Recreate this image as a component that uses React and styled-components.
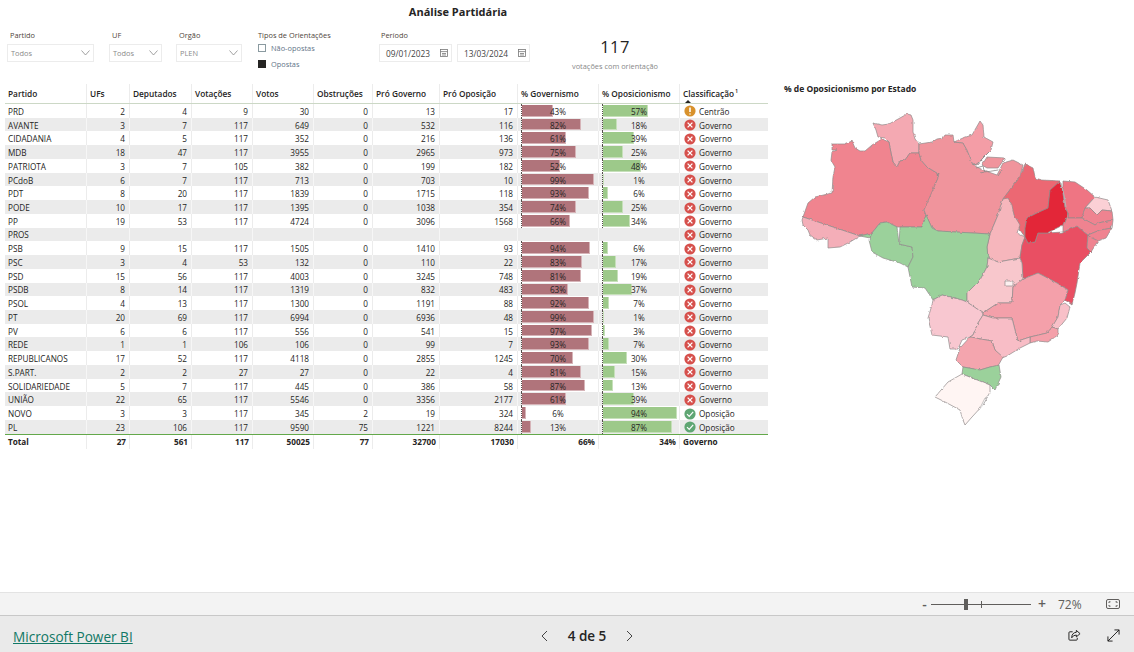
import React from 'react';
import styled, { createGlobalStyle } from 'styled-components';

const FONT = '"Open Sans", "Noto Sans", "Liberation Sans", sans-serif';

const GlobalStyle = createGlobalStyle`
  html, body {
    margin: 0;
    padding: 0;
    background: #fff;
  }
  body {
    font-family: ${FONT};
    overflow: hidden;
  }
`;

const COLUMNS = '81px 43px 62px 61px 61px 59px 67px 78px 81px 81px 89px';

const PARTIES = [
  ['PRD', 2, 4, 9, 30, 0, 13, 17, 43, 57, 'Centrão'],
  ['AVANTE', 3, 7, 117, 649, 0, 532, 116, 82, 18, 'Governo'],
  ['CIDADANIA', 4, 5, 117, 352, 0, 216, 136, 61, 39, 'Governo'],
  ['MDB', 18, 47, 117, 3955, 0, 2965, 973, 75, 25, 'Governo'],
  ['PATRIOTA', 3, 7, 105, 382, 0, 199, 182, 52, 48, 'Governo'],
  ['PCdoB', 6, 7, 117, 713, 0, 703, 10, 99, 1, 'Governo'],
  ['PDT', 8, 20, 117, 1839, 0, 1715, 118, 93, 6, 'Governo'],
  ['PODE', 10, 17, 117, 1395, 0, 1038, 354, 74, 25, 'Governo'],
  ['PP', 19, 53, 117, 4724, 0, 3096, 1568, 66, 34, 'Governo'],
  ['PROS', '', '', '', '', '', '', '', null, null, 'Governo'],
  ['PSB', 9, 15, 117, 1505, 0, 1410, 93, 94, 6, 'Governo'],
  ['PSC', 3, 4, 53, 132, 0, 110, 22, 83, 17, 'Governo'],
  ['PSD', 15, 56, 117, 4003, 0, 3245, 748, 81, 19, 'Governo'],
  ['PSDB', 8, 14, 117, 1319, 0, 832, 483, 63, 37, 'Governo'],
  ['PSOL', 4, 13, 117, 1300, 0, 1191, 88, 92, 7, 'Governo'],
  ['PT', 20, 69, 117, 6994, 0, 6936, 48, 99, 1, 'Governo'],
  ['PV', 6, 6, 117, 556, 0, 541, 15, 97, 3, 'Governo'],
  ['REDE', 1, 1, 106, 106, 0, 99, 7, 93, 7, 'Governo'],
  ['REPUBLICANOS', 17, 52, 117, 4118, 0, 2855, 1245, 70, 30, 'Governo'],
  ['S.PART.', 2, 2, 27, 27, 0, 22, 4, 81, 15, 'Governo'],
  ['SOLIDARIEDADE', 5, 7, 117, 445, 0, 386, 58, 87, 13, 'Governo'],
  ['UNIÃO', 22, 65, 117, 5546, 0, 3356, 2177, 61, 39, 'Governo'],
  ['NOVO', 3, 3, 117, 345, 2, 19, 324, 6, 94, 'Oposição'],
  ['PL', 23, 106, 117, 9590, 75, 1221, 8244, 13, 87, 'Oposição'],
];

const HEADERS = [
  'Partido',
  'UFs',
  'Deputados',
  'Votações',
  'Votos',
  'Obstruções',
  'Pró Governo',
  'Pró Oposição',
  '% Governismo',
  '% Oposicionismo',
];

const STATES = [
  { id: 'RR', fill: '#f4a9b2', points: '873,123 882,125 889,124 900,118 907,114 911,115 913,120 913,132 915,139 919,144 919,153 910,153 905,160 900,161 897,167 893,162 891,153 889,142 885,138 878,137 876,130' },
  { id: 'AM', fill: '#f0848f', points: '832,144 845,144 852,141 855,148 860,151 865,151 872,145 882,139 889,142 891,153 893,162 897,167 900,161 905,160 910,153 919,153 921,160 927,167 937,173 938,178 932,195 924,210 926,215 922,227 897,227 887,222 880,223 872,233 860,236 830,226 803,217 808,203 815,197 832,193 833,177 835,167 831,160 832,152 837,150 832,150' },
  { id: 'AC', fill: '#f4aeb8', points: '802,220 803,217 830,226 860,236 850,242 840,247 828,248 828,238 817,240 810,235 808,230 803,225' },
  { id: 'PA', fill: '#f0949c', points: '919,144 932,142 937,139 943,138 945,135 953,135 954,142 963,143 967,150 973,165 983,170 997,175 1003,163 1013,160 1023,165 1020,177 1012,187 1003,199 998,215 990,234 938,231 932,228 926,215 924,210 938,178 937,173 927,167 921,160 919,153' },
  { id: 'AP', fill: '#f49da6', points: '954,142 963,138 972,135 980,121 983,125 984,137 993,142 991,150 983,158 977,165 973,165 967,150 963,143' },
  { id: 'Marajo', fill: '#f0949c', points: '987,157 1005,158 998,168 987,168 982,165' },
  { id: 'MA', fill: '#ec6873', points: '1025,164 1033,168 1035,178 1042,180 1060,181 1050,190 1048,208 1037,213 1027,218 1025,228 1025,237 1020,230 1017,222 1013,213 1007,200 1003,199 1012,187 1020,177' },
  { id: 'TO', fill: '#f6b6bc', points: '1008,198 1012,205 1014,215 1020,225 1017,233 1025,237 1022,245 1020,258 998,262 988,258 987,247 990,234 998,215 1003,199' },
  { id: 'BA', fill: '#e95063', points: '1025,237 1028,243 1035,242 1038,233 1047,233 1063,232 1077,226 1088,235 1087,248 1091,252 1080,263 1077,283 1075,293 1072,305 1065,300 1068,290 1057,283 1038,273 1023,279 1022,263 1020,258 1022,245' },
  { id: 'PI', fill: '#e32639', points: '1060,181 1063,193 1065,207 1068,213 1063,225 1047,233 1038,233 1035,242 1028,243 1025,237 1025,228 1027,218 1037,213 1048,208 1050,190' },
  { id: 'CE', fill: '#ef7483', points: '1063,181 1075,182 1087,190 1095,197 1085,208 1082,218 1068,218 1068,213 1065,207 1063,193' },
  { id: 'RN', fill: '#fbd0d5', points: '1095,197 1108,200 1112,211 1102,210 1097,215 1090,208 1085,208' },
  { id: 'PB', fill: '#ef8390', points: '1082,218 1085,208 1090,208 1097,215 1102,210 1112,211 1113,220 1098,223 1095,225' },
  { id: 'PE', fill: '#ef8390', points: '1068,218 1082,218 1095,225 1098,223 1113,220 1112,228 1100,230 1088,235 1077,226 1063,232 1063,225 1068,213' },
  { id: 'AL', fill: '#ef8390', points: '1100,230 1112,228 1106,238 1098,241 1090,237 1088,235' },
  { id: 'SE', fill: '#ef8390', points: '1088,235 1090,237 1098,241 1091,252 1087,248' },
  { id: 'RO', fill: '#9bd19b', points: '897,227 899,244 912,247 913,257 908,267 900,263 883,258 872,252 869,240 872,233 880,223 887,222' },
  { id: 'MT', fill: '#9bd19b', points: '900,227 922,227 926,215 932,228 938,231 990,234 987,247 988,258 987,267 980,280 967,293 967,302 962,300 942,295 933,300 925,288 912,287 910,277 908,267 913,257 912,247 899,244' },
  { id: 'Sliver', fill: '#9bd19b', points: '860,236 872,233 870,238' },
  { id: 'GO', fill: '#f8c7cc', points: '988,258 998,262 1020,258 1022,263 1023,279 1013,287 1012,303 998,303 983,313 967,302 967,293 980,280 987,267' },
  { id: 'DF', fill: '#fdf0f0', points: '1005,281 1013,281 1013,286 1005,286' },
  { id: 'MS', fill: '#f8c7d0', points: '942,295 962,300 967,302 983,313 983,315 978,323 973,335 970,337 962,340 958,349 950,349 948,337 932,335 928,318 932,305 933,300' },
  { id: 'MG', fill: '#f4a0aa', points: '1023,279 1038,273 1057,283 1068,290 1065,300 1060,305 1058,317 1052,328 1047,333 1030,337 1018,341 1015,330 1012,318 993,318 983,315 983,313 998,303 1012,303 1013,287' },
  { id: 'ES', fill: '#f8c0c8', points: '1065,303 1070,307 1067,318 1058,329 1052,327 1058,317 1060,305' },
  { id: 'RJ', fill: '#f4a0aa', points: '1052,327 1058,329 1058,335 1048,342 1037,341 1030,343 1030,337 1047,333' },
  { id: 'SP', fill: '#f8bdc6', points: '983,315 993,318 1012,318 1015,330 1018,341 1030,337 1030,343 1020,348 1007,356 1002,358 995,350 992,341 970,337 973,335 978,323' },
  { id: 'PR', fill: '#f4a5ae', points: '970,337 992,341 995,350 1003,357 998,366 990,367 980,370 963,367 956,360 960,348' },
  { id: 'SC', fill: '#9bd19b', points: '963,367 980,370 990,367 999,365 1001,377 995,390 990,385 962,374' },
  { id: 'RS', fill: '#fff5f3', points: '962,374 990,385 990,392 983,405 972,417 965,425 963,420 960,410 947,403 935,397 948,382' },
];

const STATUS_COLORS = {
  Centrão: '#d8912c',
  Governo: '#d6504c',
  Oposição: '#5fa673',
};

const Page = styled.div`
  width: 1134px;
  height: 652px;
  display: flex;
  flex-direction: column;
  overflow: hidden;
`;

const Report = styled.main`
  flex: 1;
  min-height: 0;
  display: flex;
  flex-direction: column;
  padding-top: 4px;
`;

const Title = styled.h1`
  width: 916px;
  height: 26px;
  margin: 0;
  text-align: center;
  font-size: 11px;
  line-height: 16px;
  font-weight: 700;
  color: #252423;
`;

const FilterRow = styled.section`
  height: 54px;
  display: flex;
  padding-left: 7px;
`;

const Slicer = styled.div`
  width: ${(props) => props.$width}px;
  margin-right: ${(props) => props.$gap}px;
  display: flex;
  flex-direction: column;
`;

const SlicerLabel = styled.span`
  height: ${(props) => props.$height || 14}px;
  padding-left: 3px;
  font-size: 7.4px;
  line-height: 11px;
  color: #4f453c;
  white-space: nowrap;
`;

const Dropdown = styled.div`
  height: 18px;
  box-sizing: border-box;
  display: flex;
  align-items: center;
  justify-content: space-between;
  padding: 0 3px;
  border: 1px solid #ececec;
  font-size: 7.4px;
  color: #8a8a8a;
`;

const DateRow = styled.div`
  display: flex;
  gap: 5px;
  margin-left: 1px;
`;

const DateField = styled(Dropdown)`
  width: 73px;
  padding: 0 3px 0 6px;
  font-size: 8.3px;
  color: #444;
`;

const CheckRow = styled.div`
  height: 16px;
  display: flex;
  align-items: center;
  gap: 5px;
  padding-left: 3px;
  font-size: 7.4px;
  color: #5f7488;
`;

const CheckBox = styled.span`
  width: 8px;
  height: 8px;
  box-sizing: border-box;
  border: 1px solid ${(props) => (props.$checked ? '#252423' : '#8a9aa0')};
  background: ${(props) => (props.$checked ? '#252423' : '#fff')};
`;

const Kpi = styled.div`
  width: 170px;
  display: flex;
  flex-direction: column;
  align-items: center;
  padding-top: 6px;
`;

const KpiValue = styled.span`
  font-size: 16.5px;
  line-height: 22px;
  color: #252423;
  letter-spacing: 0.4px;
`;

const KpiCaption = styled.span`
  margin-top: 3px;
  font-size: 7.4px;
  line-height: 10px;
  color: #888;
`;

const Content = styled.section`
  display: flex;
  padding-left: 5px;
`;

const Table = styled.div`
  width: 763px;
  flex: none;
`;

const HeaderRow = styled.div`
  height: 20px;
  display: grid;
  grid-template-columns: ${COLUMNS};
  border-bottom: 1px solid #ccd8c6;
  box-sizing: border-box;
`;

const HeaderCell = styled.div`
  position: relative;
  display: flex;
  align-items: center;
  box-sizing: border-box;
  padding: 0 0 1px 3px;
  border-left: ${(props) => (props.$first ? 'none' : '1px solid #ececec')};
  font-size: 8.3px;
  font-weight: 600;
  color: #252423;
  white-space: nowrap;
`;

const SortCaret = styled.span`
  position: absolute;
  left: 5px;
  bottom: 0;
  width: 0;
  height: 0;
  border-left: 3px solid transparent;
  border-right: 3px solid transparent;
  border-bottom: 3px solid #252423;
`;

const Sup = styled.span`
  align-self: flex-start;
  margin: 4px 0 0 1px;
  font-size: 5.5px;
  line-height: 6px;
`;

const Row = styled.div`
  height: 13.74px;
  display: grid;
  grid-template-columns: ${COLUMNS};
  background: ${(props) => (props.$shaded ? '#ebebeb' : '#fff')};
`;

const Cell = styled.div`
  position: relative;
  box-sizing: border-box;
  display: flex;
  align-items: center;
  justify-content: ${(props) => (props.$align === 'left' ? 'flex-start' : 'flex-end')};
  padding: 1px 4px 0 3px;
  border-left: ${(props) => (props.$first ? 'none' : `1px solid ${props.$shaded ? '#f6f6f6' : '#ececec'}`)};
  font-size: 8.2px;
  color: #252423;
  white-space: nowrap;
  overflow: hidden;
`;

const TotalRow = styled.div`
  height: 14px;
  display: grid;
  grid-template-columns: ${COLUMNS};
  border-top: 1px solid #63a84a;
`;

const TotalCell = styled(Cell)`
  font-weight: 700;
  padding: 0 3px;
`;

const BarCell = styled(Cell)`
  justify-content: center;
  padding: 1px 0 0;
`;

const AxisLine = styled.span`
  position: absolute;
  left: 3px;
  top: 0;
  bottom: 0;
  border-left: 1px dotted #55504c;
`;

const Bar = styled.span`
  position: absolute;
  left: 4px;
  top: 1px;
  bottom: 1px;
  box-sizing: border-box;
  background: ${(props) => props.$color};
  border-right: 1px solid ${(props) => props.$edge};
  border-bottom: 1px solid ${(props) => props.$edge};
`;

const BarLabel = styled.span`
  position: relative;
`;

const StatusCell = styled(Cell)`
  justify-content: flex-start;
  gap: 3px;
  padding-left: 4px;
`;

const MapPanel = styled.div`
  flex: 1;
  padding-left: 16px;
`;

const MapTitle = styled.h2`
  margin: 0;
  height: 11px;
  font-size: 8.5px;
  line-height: 9px;
  font-weight: 700;
  color: #252423;
  white-space: nowrap;
`;

const MapSvg = styled.svg`
  display: block;
  margin-left: 11px;
`;

const ZoomBar = styled.div`
  height: 24px;
  flex: none;
  box-sizing: border-box;
  display: flex;
  align-items: center;
  padding-left: 921px;
  background: #f3f3f3;
  border-top: 1px solid #e3e3e3;
  border-bottom: 1px solid #c8c8c8;
  color: #605e5c;
`;

const ZoomSign = styled.span`
  width: ${(props) => props.$width}px;
  font-size: 14px;
  line-height: 14px;
  font-weight: 600;
  text-align: center;
`;

const ZoomTrack = styled.div`
  position: relative;
  width: 100px;
  height: 1px;
  margin: 0 6px 0 3px;
  background: #605e5c;
`;

const ZoomThumb = styled.span`
  position: absolute;
  left: 33px;
  top: -5px;
  width: 4px;
  height: 11px;
  background: #605e5c;
`;

const ZoomTick = styled.span`
  position: absolute;
  left: 50px;
  top: -3px;
  width: 1px;
  height: 7px;
  background: #605e5c;
`;

const ZoomValue = styled.span`
  margin-left: 11px;
  width: 48px;
  font-size: 12px;
  color: #605e5c;
`;

const Footer = styled.footer`
  height: 36px;
  flex: none;
  box-sizing: border-box;
  display: grid;
  grid-template-columns: 1fr auto 1fr;
  align-items: center;
  padding: 3px 14px 0 13px;
  background: #eaeaea;
`;

const PowerBiLink = styled.a`
  font-size: 13.6px;
  color: #117865;
  text-decoration: underline;
`;

const Pager = styled.nav`
  display: flex;
  align-items: center;
  gap: 20px;
  margin-left: 41px;
`;

const PagerText = styled.span`
  font-size: 13.5px;
  font-weight: 600;
  color: #252423;
`;

const FooterIcons = styled.div`
  display: flex;
  justify-content: flex-end;
  gap: 26px;
`;

function Chevron() {
  return (
    <svg width="9" height="6" viewBox="0 0 9 6" fill="none" stroke="#8a8a8a" strokeWidth="0.8">
      <path d="M0.5 0.5 L4.5 5 L8.5 0.5" />
    </svg>
  );
}

function CalendarIcon() {
  return (
    <svg width="8" height="8" viewBox="0 0 8 8" fill="none" stroke="#777" strokeWidth="0.8">
      <rect x="0.5" y="0.5" width="7" height="7" />
      <path d="M0.5 2.6 H7.5 M2 4.5 H6 M2 6 H6" />
    </svg>
  );
}

function StatusIcon({ status }) {
  return (
    <svg width="12" height="12" viewBox="0 0 12 12" style={{ flex: 'none' }}>
      <circle cx="6" cy="6" r="5.6" fill={STATUS_COLORS[status]} />
      {status === 'Centrão' && (
        <path d="M6 2.5 V7 M6 8.4 V9.6" stroke="#fff" strokeWidth="1.6" fill="none" />
      )}
      {status === 'Governo' && (
        <path d="M3.6 3.6 L8.4 8.4 M8.4 3.6 L3.6 8.4" stroke="#fff" strokeWidth="1.3" fill="none" />
      )}
      {status === 'Oposição' && (
        <path d="M3 6.2 L5.2 8.4 L9.2 3.8" stroke="#fff" strokeWidth="1.2" fill="none" />
      )}
    </svg>
  );
}

function PercentBar({ value, scale, color, edge, shaded }) {
  if (value === null) {
    return <BarCell $shaded={shaded} />;
  }

  return (
    <BarCell $shaded={shaded}>
      <Bar $color={color} $edge={edge} style={{ width: value * scale }} />
      <AxisLine />
      <BarLabel>{value}%</BarLabel>
    </BarCell>
  );
}

function BrazilMap() {
  return (
    <MapSvg width="339" height="335" viewBox="795 95 339 335">
      <defs>
        {/* roughens the straight polygon edges into coastline-like ones */}
        <filter id="rough" x="795" y="95" width="339" height="335" filterUnits="userSpaceOnUse">
          <feTurbulence type="fractalNoise" baseFrequency="0.22" numOctaves="2" seed="4" result="noise" />
          <feDisplacementMap in="SourceGraphic" in2="noise" scale="2.6" xChannelSelector="R" yChannelSelector="G" />
          <feGaussianBlur stdDeviation="0.25" />
        </filter>
      </defs>
      <g filter="url(#rough)">
        {STATES.map((state) => (
          <polygon
            key={state.id}
            points={state.points}
            fill={state.fill}
            stroke="#8f8a8a"
            strokeWidth="0.7"
            strokeLinejoin="round"
          />
        ))}
        <path
          d="M973 166 L978 163 L984 157 L989 152 M976 168 L983 166 L985 172 L980 173 M984 172 L992 171 L998 170 M998 176 L1002 170 M937 175 L939 173 L938 177 Z"
          fill="none"
          stroke="#8f8a8a"
          strokeWidth="0.8"
        />
        <path d="M1061 182 L1064 195 L1066 207" fill="none" stroke="#b5b5b5" strokeWidth="1" />
        <path d="M983 405 L988 396 L985 398 L979 410" fill="#fff" stroke="#8f8a8a" strokeWidth="0.5" />
      </g>
    </MapSvg>
  );
}

function PartyRow({ party, shaded }) {
  const numbers = party.slice(1, 8);
  const [governism, opposition, status] = party.slice(8);

  return (
    <Row $shaded={shaded}>
      <Cell $first $align="left" $shaded={shaded}>
        {party[0]}
      </Cell>
      {numbers.map((value, index) => (
        <Cell key={index} $shaded={shaded}>
          {value}
        </Cell>
      ))}
      <PercentBar value={governism} scale={0.725} color="#b0747b" edge="#d6b4b8" shaded={shaded} />
      <PercentBar value={opposition} scale={0.79} color="#9dc98a" edge="#c6e0ba" shaded={shaded} />
      <StatusCell $shaded={shaded}>
        <StatusIcon status={status} />
        {status}
      </StatusCell>
    </Row>
  );
}

export default function App() {
  return (
    <Page>
      <GlobalStyle />
      <Report>
        <Title>Análise Partidária</Title>
        <FilterRow>
          <Slicer $width={87} $gap={15}>
            <SlicerLabel>Partido</SlicerLabel>
            <Dropdown>
              Todos
              <Chevron />
            </Dropdown>
          </Slicer>
          <Slicer $width={53} $gap={14}>
            <SlicerLabel>UF</SlicerLabel>
            <Dropdown>
              Todos
              <Chevron />
            </Dropdown>
          </Slicer>
          <Slicer $width={66} $gap={13}>
            <SlicerLabel>Orgão</SlicerLabel>
            <Dropdown>
              PLEN
              <Chevron />
            </Dropdown>
          </Slicer>
          <Slicer $width={123} $gap={0}>
            <SlicerLabel $height={10}>Tipos de Orientações</SlicerLabel>
            <CheckRow>
              <CheckBox />
              Não-opostas
            </CheckRow>
            <CheckRow>
              <CheckBox $checked />
              Opostas
            </CheckRow>
          </Slicer>
          <Slicer $width={152} $gap={0}>
            <SlicerLabel>Período</SlicerLabel>
            <DateRow>
              <DateField>
                09/01/2023
                <CalendarIcon />
              </DateField>
              <DateField>
                13/03/2024
                <CalendarIcon />
              </DateField>
            </DateRow>
          </Slicer>
          <Kpi>
            <KpiValue>117</KpiValue>
            <KpiCaption>votações com orientação</KpiCaption>
          </Kpi>
        </FilterRow>
        <Content>
          <Table>
            <HeaderRow>
              {HEADERS.map((header, index) => (
                <HeaderCell key={header} $first={index === 0}>
                  {header}
                </HeaderCell>
              ))}
              <HeaderCell>
                Classificação
                <Sup>1</Sup>
                <SortCaret />
              </HeaderCell>
            </HeaderRow>
            {PARTIES.map((party, index) => (
              <PartyRow key={party[0]} party={party} shaded={index % 2 === 1} />
            ))}
            <TotalRow>
              <TotalCell $first $align="left">
                Total
              </TotalCell>
              <TotalCell>27</TotalCell>
              <TotalCell>561</TotalCell>
              <TotalCell>117</TotalCell>
              <TotalCell>50025</TotalCell>
              <TotalCell>77</TotalCell>
              <TotalCell>32700</TotalCell>
              <TotalCell>17030</TotalCell>
              <TotalCell>66%</TotalCell>
              <TotalCell>34%</TotalCell>
              <TotalCell $align="left">Governo</TotalCell>
            </TotalRow>
          </Table>
          <MapPanel>
            <MapTitle>% de Oposicionismo por Estado</MapTitle>
            <BrazilMap />
          </MapPanel>
        </Content>
      </Report>
      <ZoomBar>
        <ZoomSign $width={7}>-</ZoomSign>
        <ZoomTrack>
          <ZoomThumb />
          <ZoomTick />
        </ZoomTrack>
        <ZoomSign $width={10}>+</ZoomSign>
        <ZoomValue>72%</ZoomValue>
        <svg width="14" height="10" viewBox="0 0 14 10" fill="none" stroke="#605e5c" strokeWidth="1">
          <rect x="0.5" y="0.5" width="13" height="9" rx="1.5" />
          <path d="M3 4 V2.8 H4.5 M11 4 V2.8 H9.5 M3 6 V7.2 H4.5 M11 6 V7.2 H9.5" />
        </svg>
      </ZoomBar>
      <Footer>
        <div>
          <PowerBiLink>Microsoft Power BI</PowerBiLink>
        </div>
        <Pager>
          <svg width="7" height="12" viewBox="0 0 7 12" fill="none" stroke="#444" strokeWidth="1">
            <path d="M6 1 L1 6 L6 11" />
          </svg>
          <PagerText>4 de 5</PagerText>
          <svg width="7" height="12" viewBox="0 0 7 12" fill="none" stroke="#444" strokeWidth="1">
            <path d="M1 1 L6 6 L1 11" />
          </svg>
        </Pager>
        <FooterIcons>
          <svg width="13" height="13" viewBox="0 0 14 13" fill="none" stroke="#1b1a19" strokeWidth="1">
            <path d="M5 2.5 H2 Q1 2.5 1 3.5 V10.5 Q1 11.5 2 11.5 H9 Q10 11.5 10 10.5 V9" />
            <path d="M9 1 L13 4.5 L9 8 V6 Q5.5 6 4 9 Q4 3.5 9 3 Z" />
          </svg>
          <svg width="13" height="13" viewBox="0 0 14 14" fill="none" stroke="#1b1a19" strokeWidth="1">
            <path d="M1 13 L13 1 M8 1 H13 V6 M1 8 V13 H6" />
          </svg>
        </FooterIcons>
      </Footer>
    </Page>
  );
}
